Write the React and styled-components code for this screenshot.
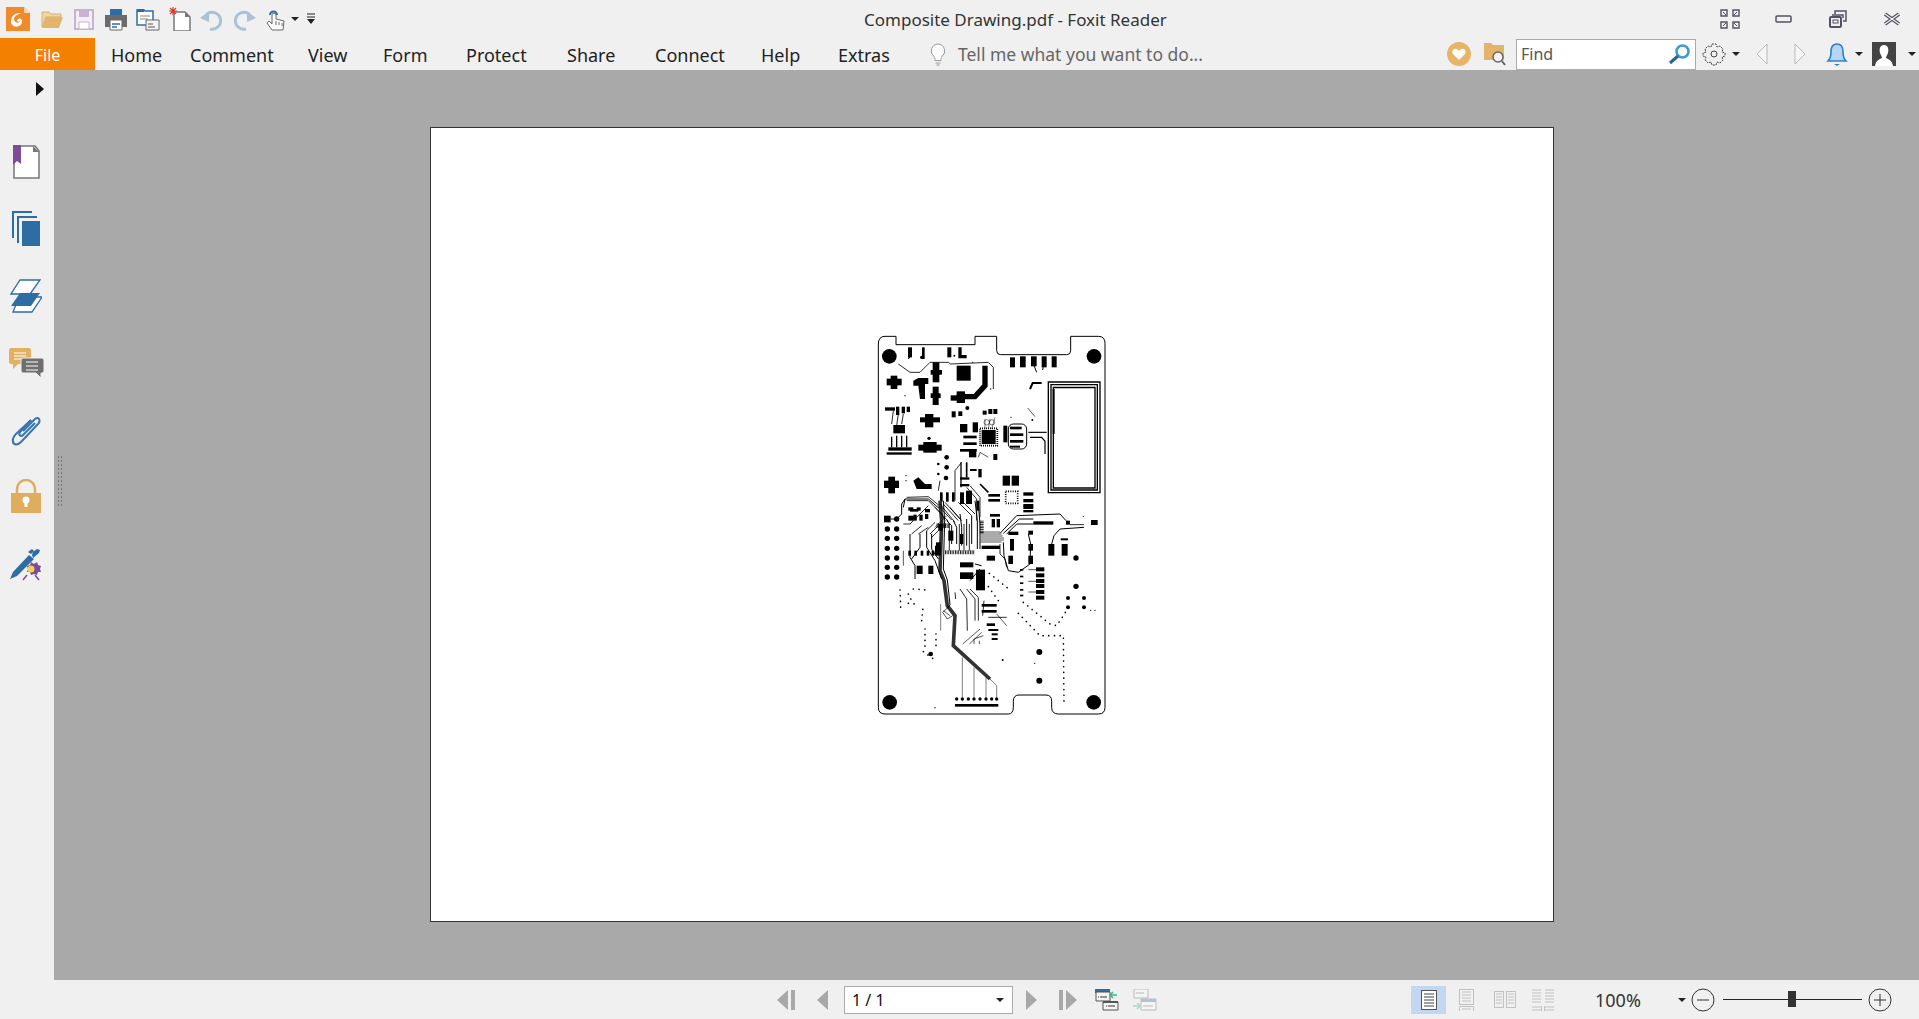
import React from "react";
import styled, { createGlobalStyle } from "styled-components";

const GlobalStyle = createGlobalStyle`
  html, body {
    margin: 0;
    padding: 0;
    height: 100%;
    overflow: hidden;
  }
  body {
    font-family: "Noto Sans", "Open Sans", sans-serif;
    background: #f0f0f0;
    color: #222;
  }
`;

const Window = styled.div`
  width: 1919px;
  height: 1019px;
  display: flex;
  flex-direction: column;
`;

const TitleRow = styled.div`
  height: 38px;
  display: grid;
  grid-template-columns: 864px auto 1fr;
  align-items: center;
`;

const QuickBar = styled.div`
  display: flex;
  align-items: center;
  padding-left: 2px;
`;

const Title = styled.div`
  font-size: 17px;
  color: #333;
`;

const WinControls = styled.div`
  display: flex;
  justify-content: flex-end;
`;

const Slot = styled.div`
  width: ${(p) => p.$w}px;
  height: ${(p) => p.$h || 32}px;
  display: flex;
  align-items: center;
  justify-content: center;
  flex: none;
`;

const MenuRow = styled.div`
  height: 32px;
  display: flex;
  align-items: center;
`;

const FileTab = styled.div`
  width: 95px;
  height: 32px;
  padding-top: 1px;
  box-sizing: border-box;
  background: #f48000;
  color: #fff;
  font-size: 16px;
  display: flex;
  align-items: center;
  justify-content: center;
  margin-right: 16px;
`;

const Tab = styled.div`
  width: ${(p) => p.$w}px;
  padding-top: 1px;
  font-size: 18px;
  color: #222;
  flex: none;
`;

const Hint = styled.div`
  font-size: 17.5px;
  color: #666;
  margin-left: 11px;
`;

const RightTools = styled.div`
  margin-left: auto;
  display: flex;
  align-items: center;
  height: 32px;
`;

const FindBox = styled.div`
  width: 180px;
  height: 31px;
  margin-right: 3px;
  box-sizing: border-box;
  background: #fff;
  border: 1px solid #aaa;
  display: flex;
  align-items: center;
  justify-content: space-between;
  padding: 0 3px 0 4px;
  font-size: 16px;
  color: #555;
`;

const Body = styled.div`
  flex: 1;
  display: flex;
  min-height: 0;
`;

const SideBar = styled.div`
  width: 54px;
  flex: none;
  display: flex;
  flex-direction: column;
  align-items: center;
`;

const CollapseSlot = styled.div`
  height: 58px;
  padding-top: 9px;
  box-sizing: border-box;
  align-self: flex-end;
  width: 18px;
`;

const SideIcon = styled.div`
  height: 67px;
  width: 54px;
  display: flex;
  align-items: center;
  justify-content: center;
  padding-right: 2px;
  box-sizing: border-box;
`;

const Main = styled.div`
  flex: 1;
  position: relative;
  background: #a9a9a9;
  padding: 57px 0 0 376px;
  box-sizing: border-box;
`;

const Grip = styled.div`
  position: absolute;
  left: 3px;
  top: 385px;
  width: 5px;
  height: 53px;
  background-image: radial-gradient(circle, #777 0.7px, transparent 0.8px);
  background-size: 3px 4px;
`;

const Page = styled.div`
  width: 1124px;
  height: 795px;
  box-sizing: border-box;
  background: #fff;
  border: 1px solid #333;
  display: flex;
  align-items: center;
  justify-content: center;
`;

const StatusBar = styled.div`
  height: 39px;
  display: flex;
  align-items: center;
`;

const PagerGroup = styled.div`
  display: flex;
  align-items: center;
  margin-left: 767px;
`;

const PageInput = styled.div`
  width: 169px;
  height: 28px;
  box-sizing: border-box;
  background: #fff;
  border: 1px solid #aaa;
  font-size: 16px;
  color: #111;
  display: flex;
  align-items: center;
  justify-content: space-between;
  padding: 0 8px 0 7px;
  margin-left: 3px;
`;

const ViewButton = styled.div`
  width: 35px;
  height: 28px;
  margin-right: 3px;
  display: flex;
  align-items: center;
  justify-content: center;
  background: ${(p) => (p.$on ? "#c4d7f2" : "transparent")};
`;

const ViewGroup = styled.div`
  display: flex;
  align-items: center;
  margin-left: 248px;
`;

const Zoom = styled.div`
  font-size: 18px;
  color: #333;
  width: 83px;
  padding-left: 32px;
`;

const Caret = styled.span`
  display: block;
  flex: none;
  width: 0;
  height: 0;
  border-left: ${(p) => p.$s || 4}px solid transparent;
  border-right: ${(p) => p.$s || 4}px solid transparent;
  border-top: ${(p) => p.$s || 4}px solid #222;
`;

const Track = styled.div`
  width: 139px;
  height: 1px;
  background: #222;
  margin: 0 5px 0 3px;
  position: relative;
`;

const Thumb = styled.div`
  position: absolute;
  left: 65px;
  top: -8px;
  width: 8px;
  height: 16px;
  background: #333;
`;

const Icon = ({ w = 24, h = 24, children }) => (
  <svg width={w} height={h} viewBox={`0 0 ${w} ${h}`} fill="none">
    {children}
  </svg>
);

const LogoIcon = () => (
  <Icon>
    <path d="M0 0h18l6 6v18H0z" fill="#f08a2a" />
    <path d="M18 0l6 6h-6z" fill="#fbd9b5" />
    <path d="M17 7c-6-2-11 1-12 6-1 5 4 8 8 6 3-1 4-5 2-7-2-1-4 0-4 2 1 1 2 1 3 0-1 3-6 2-6-2 0-3 5-6 9-5z" fill="#fff" />
  </Icon>
);
const FolderIcon = () => (
  <Icon>
    <path d="M2 5h7l2 2h10v3H6L2 20z" fill="#f0d5a5" stroke="#d8b070" />
    <path d="M6 10h17l-4 11H2z" fill="#e3b56b" />
  </Icon>
);
const SaveIcon = () => (
  <Icon>
    <path d="M3 3h18v19H3z" fill="#f4eff7" stroke="#c6b3d4" strokeWidth="2" />
    <path d="M7 3h10v7H7z" fill="#c6b3d4" />
    <path d="M7 15h10v7H7z" fill="#fff" stroke="#c6b3d4" />
  </Icon>
);
const PrintIcon = () => (
  <Icon>
    <path d="M6 2h12v6H6z" fill="#2e6da4" />
    <path d="M1 8h22v12H1z" fill="#6a6a6a" />
    <path d="M6 13h12v10H6z" fill="#fff" stroke="#666" />
    <path d="M8 17h8M8 20h5" stroke="#2e6da4" strokeWidth="1.5" />
  </Icon>
);
const MailDocIcon = () => (
  <Icon>
    <path d="M1 3h7l1 1h8v14H1z" fill="#fff" stroke="#2e6da4" strokeWidth="1.5" />
    <path d="M1 2h7v3H1z" fill="#2e6da4" />
    <path d="M4 9h10M4 12h8" stroke="#888" />
    <path d="M10 13h13v10H10z" fill="#f4f4f4" stroke="#666" />
    <path d="M12 17h5M12 20h7" stroke="#555" />
  </Icon>
);
const NewIcon = () => (
  <Icon>
    <path d="M6 5h11l5 5v14H6z" fill="#fff" stroke="#777" strokeWidth="1.5" />
    <path d="M17 5l5 5h-5z" fill="#777" />
    <path d="M5 0v8M1 4h8M2 1l6 6M8 1L2 7" stroke="#d8402a" strokeWidth="1.2" />
  </Icon>
);
const UndoIcon = ({ flip }) => (
  <Icon>
    <g transform={flip ? "translate(24 0) scale(-1 1)" : undefined}>
      <path d="M7 7a8.5 8.5 0 1 1 3 15" stroke="#a9c2da" strokeWidth="3" />
      <path d="M0 11l9-7v11z" fill="#a9c2da" />
    </g>
  </Icon>
);
const HandIcon = () => (
  <Icon>
    <path d="M6 8a3.5 3.5 0 0 1 7 0" stroke="#2e6da4" strokeWidth="2" />
    <path d="M8 8v9l-3-3-2 2 5 7h11l1-9-8-2V8a1.5 1.5 0 0 0-4 0z" fill="#fff" stroke="#666" />
    <path d="M12 14v4M15 15v3M18 16v3" stroke="#666" />
  </Icon>
);
const CustomizeIcon = () => (
  <Icon w={10} h={12}>
    <path d="M1 1h8M1 4h8" stroke="#222" />
    <path d="M1 6h8l-4 5z" fill="#222" />
  </Icon>
);
const MaxIcon = () => (
  <Icon w={20} h={20}>
    <g stroke="#555066" strokeWidth="1.4">
      <path d="M1 1h6v6H1zM13 1h6v6h-6zM1 13h6v6H1zM13 13h6v6h-6z" fill="#f0f0f0" />
    </g>
    <path d="M3 3l3 3M17 3l-3 3M3 17l3-3M17 17l-3-3" stroke="#555066" />
  </Icon>
);
const MinIcon = () => (
  <Icon w={18} h={10}>
    <rect x="1" y="2" width="15" height="6" rx="1" stroke="#555066" strokeWidth="1.5" />
  </Icon>
);
const RestoreIcon = () => (
  <Icon w={18} h={18}>
    <path d="M6 4V1h11v10h-3" stroke="#555066" strokeWidth="1.5" />
    <path d="M3 5h11v3" stroke="#555066" strokeWidth="1.5" />
    <rect x="1" y="7" width="11" height="10" rx="1" stroke="#555066" strokeWidth="2" />
    <rect x="4" y="10" width="5" height="3" stroke="#555066" />
  </Icon>
);
const CloseIcon = () => (
  <Icon w={18} h={14}>
    <path d="M2 2l14 10M16 2L2 12" stroke="#555066" strokeWidth="3.5" />
    <path d="M2 2l14 10M16 2L2 12" stroke="#f0f0f0" strokeWidth="1.2" />
  </Icon>
);
const BulbIcon = () => (
  <Icon w={18} h={24}>
    <path d="M9 2a7 7 0 0 0-4 12.5c1 1 1 3 1 4h6c0-1 0-3 1-4A7 7 0 0 0 9 2z" fill="#fff" stroke="#999" />
    <path d="M6.500 21h5M7.500 23h3" stroke="#999" />
  </Icon>
);
const HeartIcon = () => (
  <Icon>
    <circle cx="12" cy="12" r="12" fill="#e8b46a" />
    <path d="M12 18l-6-6c-2-3 1-6 3.500-5 1 .3 2 1 2.500 2 .5-1 1.500-1.700 2.500-2 2.500-1 5.500 2 3.500 5z" fill="#fff" />
  </Icon>
);
const FolderSearchIcon = () => (
  <Icon>
    <path d="M1 1h7l2 2h11v3H1z" fill="#e3b56b" />
    <path d="M1 6h20v12H1z" fill="#e3b56b" />
    <circle cx="15" cy="15" r="5" fill="#f4f4f4" stroke="#666" strokeWidth="1.5" />
    <path d="M19 19l3 4" stroke="#666" strokeWidth="2" />
  </Icon>
);
const SearchIcon = () => (
  <Icon>
    <circle cx="14.500" cy="9.500" r="6" stroke="#3f9bd0" strokeWidth="2.600" />
    <path d="M10 14l-8 7" stroke="#2a5f98" strokeWidth="3" />
  </Icon>
);
const GearIcon = () => (
  <Icon>
    <circle cx="12" cy="12" r="3" stroke="#444" />
    <path
      d="M10 2h4l1 3 3-1 3 3-1 3 3 1v3l-3 1 1 3-3 3-3-1-1 3h-4l-1-3-3 1-3-3 1-3-3-1v-3l3-1-1-3 3-3 3 1z"
      stroke="#444"
      strokeDasharray="2 1"
    />
  </Icon>
);
const ArrowOutline = ({ flip }) => (
  <Icon w={12} h={22}>
    <path d={flip ? "M1 1l10 10L1 21z" : "M11 1L1 11l10 10z"} fill="#f6f6f6" stroke="#b8b8b8" />
  </Icon>
);
const BellIcon = () => (
  <Icon>
    <path d="M12 2c5 0 6 4 6 8 0 4 1 7 3 9H3c2-2 3-5 3-9 0-4 1-8 6-8z" fill="#b4d6f4" stroke="#2f7fc8" strokeWidth="1.600" />
    <path d="M9 22h6l-3 2z" fill="#2f7fc8" />
  </Icon>
);
const AvatarIcon = () => (
  <Icon>
    <rect width="24" height="24" fill="#444" />
    <path d="M12 3c4 0 5 4 4 8-.5 2-2 3-2 5 2 1 6 2 7 8H3c1-6 5-7 7-8 0-2-1.500-3-2-5-1-4 0-8 4-8z" fill="#fff" />
  </Icon>
);

const BookmarksIcon = () => (
  <Icon w={28} h={34}>
    <path d="M2 1h21l4 5v27H2z" fill="#fff" stroke="#777" strokeWidth="1.500" />
    <path d="M21 1l6 6h-6z" fill="#777" />
    <path d="M1 0h8v19l-4-3-4 4z" fill="#7d4c97" />
  </Icon>
);
const PagesIcon = () => (
  <Icon w={30} h={36}>
    <path d="M1 0h20v2H3v25H1z" fill="#2e6da4" />
    <path d="M6 5h20v2H8v25H6z" fill="#2e6da4" />
    <path d="M11 10h18v25H11z" fill="#2e6da4" />
  </Icon>
);
const LayersIcon = () => (
  <Icon w={32} h={34}>
    <path d="M10 1h20L20 15H1z" fill="#fff" stroke="#2e6da4" strokeWidth="1.300" />
    <path d="M9 18h23L22 33H3z" fill="#fff" stroke="#2e6da4" strokeWidth="1.300" />
    <path d="M10 14h20l-9 13H1z" fill="#2e6da4" />
  </Icon>
);
const CommentsIcon = () => (
  <Icon w={36} h={30}>
    <path d="M1 2a2 2 0 0 1 2-2h18a2 2 0 0 1 2 2v12a2 2 0 0 1-2 2H10l-5 5v-5H3a2 2 0 0 1-2-2z" fill="#e3b061" />
    <path d="M6 5h12M6 8h12M6 11h8" stroke="#fff" />
    <path d="M13 12a2 2 0 0 1 2-2h19a2 2 0 0 1 2 2v11a2 2 0 0 1-2 2h-1v5l-5-5H15a2 2 0 0 1-2-2z" fill="#6f6f6f" stroke="#f0f0f0" />
    <path d="M18 14h12M18 18h12M18 22h12" stroke="#fff" />
  </Icon>
);
const ClipIcon = () => (
  <Icon w={30} h={32}>
    <path
      d="M12 16l12-12c4-3 6 2 3 5L10 27c-4 4-9 3-8-3 0-2 2-4 3-5L20 5"
      stroke="#3a74ad"
      strokeWidth="2"
      transform="translate(0 1)"
    />
    <path d="M20 6L9 18c-2 3 1 5 3 3l12-12" stroke="#3a74ad" strokeWidth="2" />
  </Icon>
);
const LockIcon = () => (
  <Icon w={32} h={36}>
    <path d="M7 15V10a9 9 0 0 1 18 0v5" stroke="#e0ac5e" strokeWidth="2.500" />
    <rect x="1" y="14" width="30" height="20" fill="#e0ac5e" />
    <circle cx="16" cy="21" r="3.500" fill="#fff" />
    <path d="M14.500 22h3v6h-3z" fill="#fff" />
  </Icon>
);
const SignIcon = () => (
  <Icon w={34} h={34}>
    <path d="M1 32l3-7L20 8l5 4L8 29z" fill="#2e6da4" />
    <path d="M19 5l4-3 2 2-3 3zM24 5l4-3 3 1-1 3-6 5-1-3z" fill="#2e6da4" />
    <path d="M22 15l3 2 3-2 1 3 3 1-1 3 1 3-3 0-1 3-3-1-3 1-1-3-3 0 1-3-1-3 3-1z" fill="#7d4c97" />
    <circle cx="22" cy="22" r="3.500" fill="#f4cf5e" />
    <path d="M14 33l4-5M30 33l-4-5" stroke="#7d4c97" strokeWidth="1.500" />
  </Icon>
);

const Triangle = ({ dir = 1, bar }) => (
  <Icon w={20} h={20}>
    <g fill="#a8a8a8" transform={dir < 0 ? "translate(20 0) scale(-1 1)" : undefined}>
      {bar && <path d="M1 0h4v20H1z" />}
      <path d={bar ? "M8 0l11 10L8 20z" : "M5 0l11 10L5 20z"} />
    </g>
  </Icon>
);
const ListIconA = () => (
  <Icon w={24} h={22}>
    <path d="M0 0h15v4H0z" fill="#2e6da4" />
    <path d="M1 3h14v9H1z" fill="#f4f4f4" stroke="#555" />
    <path d="M8 13h15v8H8z" fill="#f4f4f4" stroke="#555" />
    <path d="M8 12h15v2H8z" fill="#555" />
    <path d="M11 17h9M3 8h9" stroke="#333" strokeDasharray="1 1 6 0" />
    <path d="M22 6h-6m2-3l-3 3 3 3" stroke="#3fb58c" strokeWidth="1.500" />
  </Icon>
);
const ListIconB = () => (
  <Icon w={24} h={22}>
    <path d="M1 0h14v9H1z" fill="#f4f4f4" stroke="#bbb" />
    <path d="M8 10h15v11H8z" fill="#f4f4f4" stroke="#bbb" />
    <path d="M8 10h15v3H8z" fill="#aec4de" />
    <path d="M0 17h6m-2-3l3 3-3 3" stroke="#a5dcc8" strokeWidth="1.500" />
    <path d="M3 4h8M10 17h10" stroke="#bbb" />
  </Icon>
);
const Lines = ({ x, y, w, n, gap, c }) => (
  <path
    d={Array.from({ length: n }, (_, i) => `M${x} ${y + i * gap}h${w}`).join("")}
    stroke={c}
  />
);
const SingleIcon = () => (
  <Icon w={16} h={20}>
    <rect x="0.500" y="0.500" width="15" height="19" fill="#fff" stroke="#555" />
    <Lines x={3} y={4} w={10} n={5} gap={3} c="#444" />
  </Icon>
);
const ContinuousIcon = () => (
  <Icon w={16} h={22}>
    <rect x="0.500" y="0.500" width="14" height="15" fill="none" stroke="#c2c2c2" />
    <Lines x={3} y={3} w={9} n={4} gap={3} c="#c2c2c2" />
    <path d="M0.500 22v-4.500h14V22M3 20h9" stroke="#c2c2c2" />
  </Icon>
);
const FacingIcon = () => (
  <Icon w={22} h={18}>
    <rect x="0.500" y="0.500" width="9" height="16" fill="none" stroke="#c2c2c2" />
    <rect x="12.500" y="0.500" width="9" height="16" fill="none" stroke="#c2c2c2" />
    <Lines x={2} y={3} w={6} n={4} gap={3} c="#c2c2c2" />
    <Lines x={14} y={3} w={6} n={4} gap={3} c="#c2c2c2" />
  </Icon>
);
const FacingContIcon = () => (
  <Icon w={22} h={22}>
    <Lines x={0} y={1} w={9} n={5} gap={3} c="#c2c2c2" />
    <Lines x={13} y={1} w={9} n={5} gap={3} c="#c2c2c2" />
    <path d="M0 18h9M0 21h9M13 18h9M13 21h9M9.500 17v5M12.500 17v5" stroke="#c2c2c2" />
  </Icon>
);
const RoundBtn = ({ plus }) => (
  <Icon w={24} h={24}>
    <circle cx="12" cy="12" r="11" stroke="#333" />
    <path d={plus ? "M6 12h12M12 6v12" : "M6 12h12"} stroke="#333" />
  </Icon>
);

// pcb artwork, coordinates are 3x screen pixels
const topRects = [
  [450, 110, 15, 30], [480, 107, 17, 33], [513, 107, 17, 30], [545, 107, 15, 33], [575, 107, 15, 33],
  [80, 174, 45, 20], [92, 165, 20, 40], [218, 125, 20, 60], [212, 148, 34, 14], [218, 198, 18, 55],
  [212, 218, 30, 14], [290, 135, 42, 45], [290, 212, 25, 35], [272, 224, 30, 16],
  [75, 260, 30, 10], [108, 258, 10, 25], [125, 258, 10, 20], [140, 258, 10, 16], [100, 313, 35, 25],
  [85, 380, 70, 10], [80, 395, 75, 7], [180, 290, 60, 15], [195, 280, 25, 40], [175, 372, 70, 18],
  [190, 364, 40, 32], [72, 480, 45, 22], [85, 468, 20, 50], [365, 328, 42, 42], [300, 310, 22, 25],
  [338, 305, 16, 30], [310, 345, 40, 8], [310, 365, 40, 8], [300, 385, 50, 8], [327, 385, 22, 25],
  [368, 270, 12, 12], [385, 265, 12, 15], [400, 265, 12, 15], [275, 272, 12, 18], [295, 272, 12, 14],
  [428, 465, 22, 30], [455, 465, 22, 30], [490, 515, 30, 10], [490, 535, 30, 10], [490, 555, 30, 10],
  [385, 520, 35, 8], [385, 535, 35, 8], [330, 445, 20, 6], [300, 470, 28, 7], [300, 490, 28, 7],
  [430, 315, 12, 50], [450, 318, 35, 8], [450, 338, 40, 8], [450, 358, 40, 8], [450, 375, 30, 6],
  [240, 515, 8, 28], [258, 515, 8, 28], [276, 515, 8, 28], [300, 515, 12, 35], [318, 510, 18, 40], [350, 540, 8, 30],
  [400, 400, 12, 18], [355, 445, 10, 25], [85, 520, 0, 0],
];
const bottomRects = [
  [72, 45, 20, 20], [300, 185, 40, 15], [300, 215, 40, 20], [348, 207, 27, 62], [170, 195, 18, 25],
  [205, 195, 15, 25], [528, 200, 25, 12], [528, 218, 25, 12], [528, 235, 25, 12], [528, 250, 25, 12],
  [528, 268, 25, 12], [528, 285, 25, 12], [693, 58, 20, 15], [618, 60, 12, 12], [565, 130, 18, 35],
  [605, 130, 18, 35], [602, 113, 22, 6], [520, 62, 60, 10], [285, 610, 130, 8], [450, 115, 12, 35],
  [505, 90, 14, 12], [505, 130, 14, 20], [445, 165, 14, 25], [505, 165, 14, 25], [445, 93, 30, 10],
  [365, 135, 55, 10], [380, 165, 25, 15], [365, 310, 45, 8], [365, 328, 45, 8], [380, 368, 25, 8],
  [385, 385, 30, 6], [395, 398, 18, 6], [395, 412, 18, 6], [228, 125, 14, 30], [390, 40, 30, 8],
  [395, 55, 10, 25], [410, 55, 10, 25], [150, 25, 25, 8], [150, 48, 20, 8], [490, 10, 30, 7],
  [490, 28, 30, 7], [480, 205, 10, 5], [480, 225, 10, 5], [480, 245, 10, 5], [480, 265, 10, 5],
  [480, 282, 10, 5],
  [145, 20, 15, 10], [170, 20, 12, 10], [195, 25, 15, 10], [145, 45, 15, 15], [160, 42, 10, 18],
  [178, 42, 10, 18], [195, 40, 10, 15], [145, 150, 8, 15], [163, 150, 8, 15], [182, 150, 8, 15],
  [200, 150, 8, 15], [215, 150, 8, 15], [265, 90, 15, 30], [235, 70, 14, 20], [300, 100, 10, 30],
];
const topCircles = [
  [88, 107, 22], [702, 107, 22], [322, 262, 6], [260, 410, 7], [260, 440, 7], [258, 472, 7],
  [235, 430, 4], [235, 460, 4], [207, 353, 5], [517, 298, 3], [185, 110, 5], [283, 105, 3],
  [135, 225, 2], [392, 205, 2], [338, 125, 2], [453, 290, 2], [138, 465, 2], [138, 480, 2],
];
const bottomCircles = [
  [89, 605, 22], [701, 605, 22], [110, 55, 8], [648, 172, 8], [648, 257, 8], [624, 292, 6], [672, 292, 6],
  [624, 320, 6], [672, 320, 6], [538, 454, 9], [538, 540, 9], [212, 460, 7], [670, 47, 2], [225, 621, 2],
  [428, 478, 3], [524, 488, 2], [705, 329, 2], [692, 329, 2],
  ...[85, 113, 143, 172, 200, 229].flatMap((y) => [[82, y, 8], [110, y, 8]]),
  ...[290, 307, 325, 342, 360, 378, 395, 410].map((x) => [x, 595, 5]),
];
const topLines = [
  [12, "150,80 150,110"], [4, "145,114 150,108"], [8, "190,80 190,115"], [12, "268,80 268,110"], [10, "300,80 300,108 320,108"],
  [2.5, "115,130 150,155 180,155 210,125 265,125 272,130 385,125 400,140 400,205"],
  [16, "375,135 375,195 345,228 290,228"], [3, "522,135 530,155"], [3, "550,135 548,148"],
  [6, "510,205 518,187 545,187"], [2.5, "100,270 95,310"], [2.5, "115,280 110,315"], [2.5, "130,280 125,310"],
  [4, "95,348 95,380"], [4, "110,345 110,380"], [4, "125,345 125,380"], [4, "140,345 140,380"],
  [2, "503,262 525,288"], [3.5, "505,335 560,335"], [3.5, "510,350 545,350 555,362 555,400"],
  [2.5, "285,450 305,425"], [2.5, "285,450 285,540"], [4, "303,425 303,500"], [5, "320,425 320,470"],
  [5, "360,490 385,515"], [1.5, "375,295 375,325"], [1.5, "390,295 385,325"], [1.5, "405,290 395,325"],
  [2.5, "240,480 235,510"], [3, "130,560 135,535 205,535 245,570"], [2.5, "140,530 205,528 250,565"],
  [2.5, "330,495 360,530 360,590"], [2.5, "320,500 350,535 350,600"],
  [2, "385,410 360,395 355,410"],
];
const bottomLines = [
  [3, "250,0 254,60 250,205 262,238 270,312 262,322"],
  [2, "262,322 248,335 262,355 278,345"],
  [1.5, "242,310 242,390"],
  [1.5, "307,470 307,590"], [1.5, "342,500 342,590"], [1.5, "378,530 378,590"], [1.5, "388,533 410,555 410,590"],
  [3, "92,55 110,55 125,40 125,10 135,-5"], [2.5, "140,0 205,0 245,40 255,60"],
  [3, "150,100 150,170 165,195 165,235"], [3, "180,100 180,140 155,175"], [3, "200,90 200,140 225,180 245,235"],
  [3, "215,100 215,145 235,175"], [2, "225,80 260,45"],
  [2.5, "155,100 185,75"], [2.5, "175,100 205,80"], [2.5, "200,90 225,65"], [2.5, "210,100 235,75"], [2.5, "215,110 240,85"],
  [2.5, "130,70 150,70 160,60 205,15"], [2, "130,150 130,195"],
  [3, "260,60 275,75 275,130"], [3, "280,60 290,80 290,130"], [3, "300,40 305,80 305,135"], [3, "320,55 320,135"], [3, "335,45 335,130"],
  [3, "355,10 360,70 360,145"], [3, "345,0 352,60 352,145"], [2.5, "268,70 268,150"], [2.5, "298,70 298,150"], [2.5, "312,70 312,150"], [2.5, "328,70 328,150"],
  [2.5, "240,10 285,65"], [2.5, "250,10 295,60"], [2.5, "270,20 305,60"], [2.5, "295,5 335,45"], [2.5, "310,5 345,40"],
  [2.5, "255,5 300,55"], [2.5, "225,20 265,62"], [2.5, "235,15 275,58"],
  [2, "362,100 425,100"], [2, "362,106 428,106"], [2, "362,112 432,112"], [2, "362,118 432,118"], [2, "362,124 425,124"], [2, "362,94 420,94"],
  [3, "420,98 470,45 600,40 618,60"], [3, "430,98 478,55 520,55"], [3, "440,100 470,70 520,70"],
  [3, "430,125 432,165 445,210 475,215 510,190 512,130 505,100"],
  [2.5, "420,130 420,160 435,175 440,200"],
  [3, "672,80 600,85 582,105 575,130"], [2.5, "630,72 672,72"],
  [2, "505,207 528,207"], [2, "505,242 528,242"], [2, "505,274 528,274"],
  [3, "330,240 360,205"], [3, "345,190 365,195"], [2.5, "300,265 320,295 322,390"], [2.5, "320,265 345,295 345,360"],
  [2.5, "330,265 355,290 355,360"], [2.5, "285,275 287,295"], [2, "308,430 360,385"], [2, "328,430 365,395"],
  [2, "342,430 342,415 370,405"], [2, "358,430 358,420"],
  [2.5, "372,300 368,345"], [2.5, "385,350 440,350"], [2, "410,340 440,375"],
  [2, "270,345 250,330"],
];
const dotted = [
  "388,218 450,268", "490,305 570,370 590,375 610,345 622,325", "475,338 540,405 610,405 612,615",
  "195,385 195,450", "228,400 228,450", "185,360 190,310", "120,268 122,320", "145,280 160,310",
  "160,265 200,268", "145,308 165,310", "385,258 415,300", "190,453 225,478",
];

const PcbDrawing = () => (
  <svg width="260" height="410" viewBox="6 -2 780 1230" fill="none">
    <path
      d="M55 70Q55 47 75 47H108V72H345V47H410V90Q410 102 422 102H620Q632 102 632 90V47H715Q735 47 735 68V1160Q735 1180 715 1180H595Q575 1180 575 1160V1142Q575 1123 558 1123H477Q460 1123 460 1142V1160Q460 1180 445 1180H75Q55 1180 55 1160Z"
      stroke="#000"
      strokeWidth="3"
    />
    <path d="M563 182h159v336H563z" fill="#000" />
    <path d="M567 186h151v328H567z" fill="#fff" />
    <path d="M571 190h143v320H571z" fill="#000" />
    <path d="M575 194h135v312H575z" fill="#fff" />
    <path d="M578 198h129v306H578z" fill="#000" />
    <path d="M582 203h121v297H582z" fill="#fff" />
    <path d="M578 205h6v135h-6z" fill="#000" />
    <path d="M160 180L175 172H205V190H195V235H180L175 195H160Z" fill="#000" />
    <path d="M160 480L175 470L195 490H215V505H170Z" fill="#000" />
    <rect x="360" y="323" width="52" height="52" stroke="#000" strokeWidth="5" strokeDasharray="3 3" />
    <rect x="437" y="512" width="36" height="36" stroke="#000" strokeWidth="5" strokeDasharray="3 4" />
    <rect x="445" y="310" width="55" height="75" rx="15" stroke="#000" strokeWidth="3" />
    <circle cx="380" cy="305" r="8" stroke="#000" strokeWidth="1.500" />
    <circle cx="396" cy="305" r="8" stroke="#000" strokeWidth="1.500" />
    {topRects.map(([x, y, w, h], i) => (
      <rect key={i} x={x} y={y} width={w} height={h} fill="#000" />
    ))}
    {topCircles.map(([cx, cy, r], i) => (
      <circle key={i} cx={cx} cy={cy} r={r} fill="#000" />
    ))}
    {topLines.map(([w, pts], i) => (
      <polyline key={i} points={pts} stroke="#000" strokeWidth={w} />
    ))}
    <g transform="translate(0 540)">
      <polyline points="240,0 245,60 240,210 252,240 262,315 285,345 280,435 390,535" stroke="#333" strokeWidth="11" />
      <path d="M255 155h90" stroke="#000" strokeWidth="12" strokeDasharray="2.500 2.500" />
      <path d="M230 75h40" stroke="#000" strokeWidth="14" strokeDasharray="2.500 2.500" />
      <path d="M365 60v40" stroke="#000" strokeWidth="12" strokeDasharray="2.500 2.500" />
      <path d="M225 135h18v30h-18z" fill="#000" />
      {bottomRects.map(([x, y, w, h], i) => (
        <rect key={i} x={x} y={y} width={w} height={h} fill="#000" />
      ))}
      {bottomCircles.map(([cx, cy, r], i) => (
        <circle key={i} cx={cx} cy={cy} r={r} fill="#000" />
      ))}
      {bottomLines.map(([w, pts], i) => (
        <polyline key={i} points={pts} stroke="#000" strokeWidth={w} />
      ))}
      {dotted.map((pts, i) => (
        <polyline key={i} points={pts} stroke="#000" strokeWidth="5" strokeLinecap="round" strokeDasharray="0.1 17" />
      ))}
    </g>
  </svg>
);

const quick = [
  [32, LogoIcon], [36, FolderIcon], [28, SaveIcon], [36, PrintIcon], [28, MailDocIcon],
  [35, NewIcon], [29, UndoIcon], [35, () => <UndoIcon flip />], [30, HandIcon],
];
const tabs = [
  ["Home", 79], ["Comment", 118], ["View", 75], ["Form", 83], ["Protect", 101],
  ["Share", 88], ["Connect", 106], ["Help", 77], ["Extras", 91],
];
const sideIcons = [BookmarksIcon, PagesIcon, LayersIcon, CommentsIcon, ClipIcon, LockIcon, SignIcon];

const App = () => (
  <Window>
    <GlobalStyle />
    <TitleRow>
      <QuickBar>
        {quick.map(([w, Ic], i) => (
          <Slot key={i} $w={w}>
            <Ic />
          </Slot>
        ))}
        <Slot $w={8}>
          <Caret />
        </Slot>
        <Slot $w={24}>
          <CustomizeIcon />
        </Slot>
      </QuickBar>
      <Title>Composite Drawing.pdf - Foxit Reader</Title>
      <WinControls>
        <Slot $w={54}>
          <MaxIcon />
        </Slot>
        <Slot $w={54}>
          <MinIcon />
        </Slot>
        <Slot $w={54}>
          <RestoreIcon />
        </Slot>
        <Slot $w={54}>
          <CloseIcon />
        </Slot>
      </WinControls>
    </TitleRow>
    <MenuRow>
      <FileTab>File</FileTab>
      {tabs.map(([name, w]) => (
        <Tab key={name} $w={w}>
          {name}
        </Tab>
      ))}
      <BulbIcon />
      <Hint>Tell me what you want to do...</Hint>
      <RightTools>
        <Slot $w={30}>
          <HeartIcon />
        </Slot>
        <Slot $w={42}>
          <FolderSearchIcon />
        </Slot>
        <FindBox>
          Find
          <SearchIcon />
        </FindBox>
        <Slot $w={30}>
          <GearIcon />
        </Slot>
        <Slot $w={14}>
          <Caret />
        </Slot>
        <Slot $w={38}>
          <ArrowOutline />
        </Slot>
        <Slot $w={38}>
          <ArrowOutline flip />
        </Slot>
        <Slot $w={36}>
          <BellIcon />
        </Slot>
        <Slot $w={8}>
          <Caret />
        </Slot>
        <Slot $w={42}>
          <AvatarIcon />
        </Slot>
        <Slot $w={14}>
          <Caret />
        </Slot>
      </RightTools>
    </MenuRow>
    <Body>
      <SideBar>
        <CollapseSlot>
          <svg width="8" height="14" viewBox="0 0 8 14">
            <path d="M0 0l8 7-8 7z" fill="#111" />
          </svg>
        </CollapseSlot>
        {sideIcons.map((Ic, i) => (
          <SideIcon key={i}>
            <Ic />
          </SideIcon>
        ))}
      </SideBar>
      <Main>
        <Grip />
        <Page>
          <PcbDrawing />
        </Page>
      </Main>
    </Body>
    <StatusBar>
      <PagerGroup>
        <Slot $w={38}>
          <Triangle dir={-1} bar />
        </Slot>
        <Slot $w={36}>
          <Triangle dir={-1} />
        </Slot>
        <PageInput>
          1 / 1
          <Caret />
        </PageInput>
        <Slot $w={36}>
          <Triangle />
        </Slot>
        <Slot $w={38}>
          <Triangle bar />
        </Slot>
        <Slot $w={40}>
          <ListIconA />
        </Slot>
        <Slot $w={36}>
          <ListIconB />
        </Slot>
      </PagerGroup>
      <ViewGroup>
        <ViewButton $on>
          <SingleIcon />
        </ViewButton>
        <ViewButton>
          <ContinuousIcon />
        </ViewButton>
        <ViewButton>
          <FacingIcon />
        </ViewButton>
        <ViewButton>
          <FacingContIcon />
        </ViewButton>
        <Zoom>100%</Zoom>
        <Caret />
        <Slot $w={34}>
          <RoundBtn />
        </Slot>
        <Track>
          <Thumb />
        </Track>
        <Slot $w={26}>
          <RoundBtn plus />
        </Slot>
      </ViewGroup>
    </StatusBar>
  </Window>
);

export default App;
